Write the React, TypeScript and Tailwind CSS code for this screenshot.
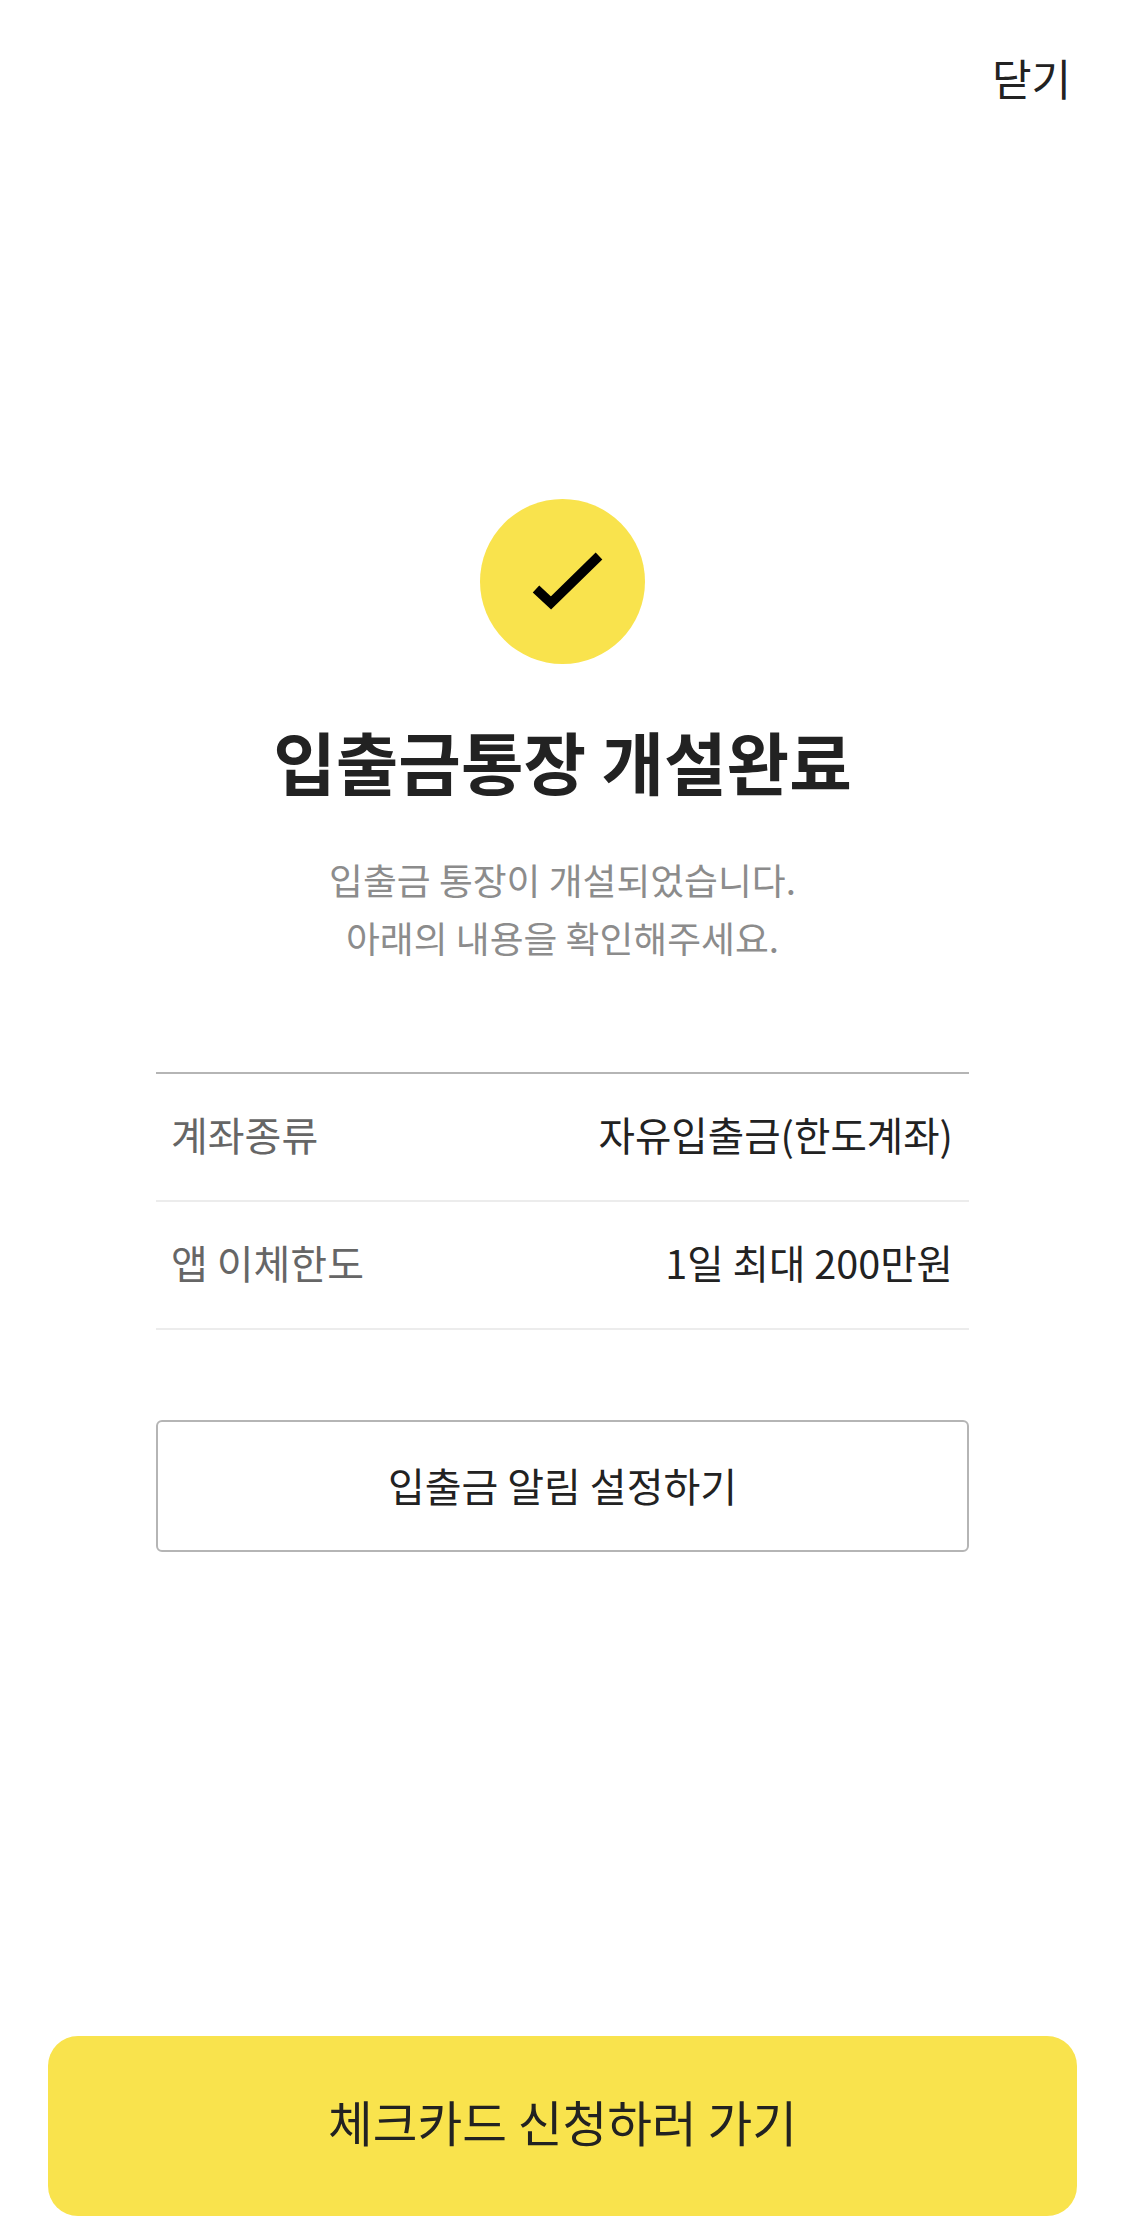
export default function App() {
  const rows = [
    { label: "계좌종류", value: "자유입출금(한도계좌)" },
    { label: "앱 이체한도", value: "1일 최대 200만원" },
  ];

  return (
    <div className="w-[1125px] h-[2228px] bg-white flex flex-col font-['Noto_Sans_CJK_KR','Noto_Sans',sans-serif] text-[#222222]">
      {/* Header */}
      <div className="flex justify-end pt-[47px] pr-[54px]">
        <button className="text-[43px] leading-[60px]">닫기</button>
      </div>

      {/* Complete icon */}
      <div className="mt-[392px] self-center w-[165px] h-[165px] rounded-full bg-[#f9e34d] flex items-center justify-center">
        <svg width="165" height="165" viewBox="0 0 165 165" fill="none">
          <path d="M56 90L71 104L119 57" stroke="#000000" strokeWidth="9.5" />
        </svg>
      </div>

      <h1 className="mt-[52px] text-center text-[68px] leading-[90px] font-bold">입출금통장 개설완료</h1>
      <p className="mt-[44px] text-center text-[36.8px] leading-[58px] text-[#8c8c8c]">
        입출금 통장이 개설되었습니다.
        <br />
        아래의 내용을 확인해주세요.
      </p>

      {/* Account info */}
      <div className="mt-[106px] mx-[156px] border-t-2 border-[#b5b5b5]">
        {rows.map((row) => (
          <div key={row.label} className="h-[128px] pl-[15px] pr-[16px] pb-[6px] flex items-center justify-between border-b-2 border-[#ececec]">
            <span className="text-[40px] text-[#666666]">{row.label}</span>
            <span className="text-[39.6px] text-[#222222]">{row.value}</span>
          </div>
        ))}
      </div>

      <button className="mt-[90px] mx-[156px] h-[132px] pb-[2px] rounded-[6px] border-2 border-[#b5b5b5] text-[40px]">
        입출금 알림 설정하기
      </button>

      {/* Bottom action */}
      <button className="mt-auto mb-[12px] mx-[48px] h-[180px] pb-[10px] rounded-[30px] bg-[#f9e34d] text-[48.6px]">
        체크카드 신청하러 가기
      </button>
    </div>
  );
}
